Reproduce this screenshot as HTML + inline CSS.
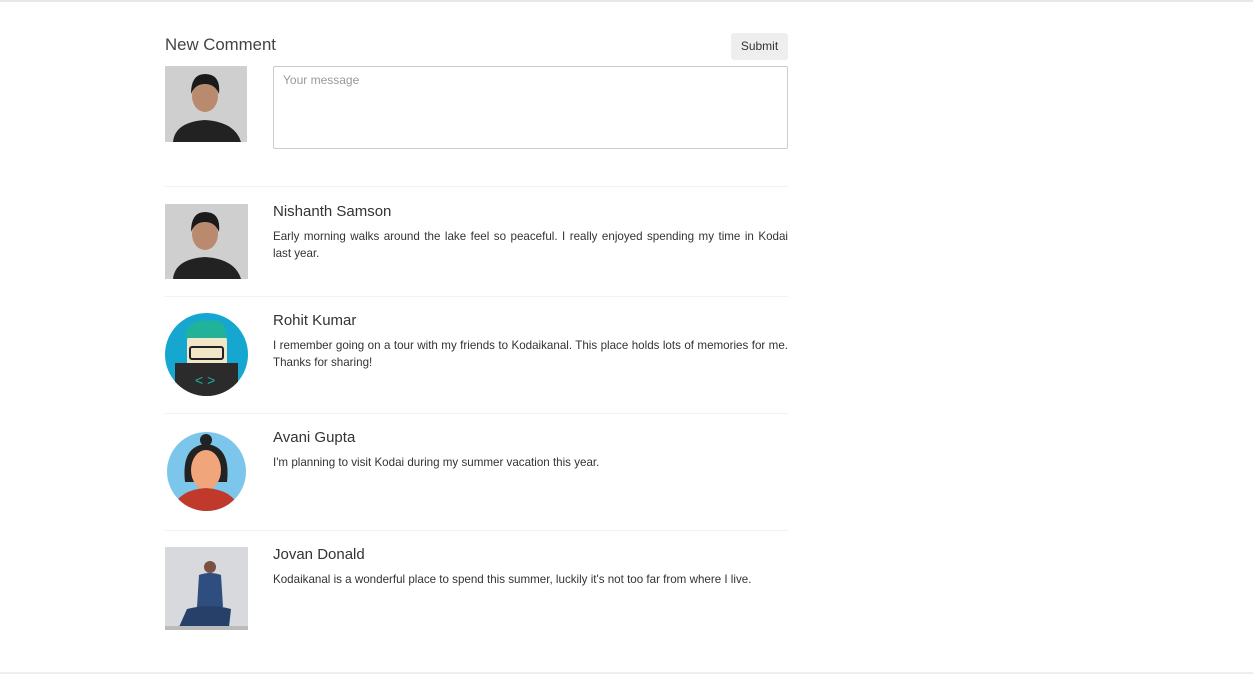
<!DOCTYPE html><html><head><style>
body{margin:0;width:1253px;height:676px;background:#fff;font-family:"Liberation Sans",sans-serif;color:#333;position:relative;overflow:hidden}
.a{position:absolute}
.hr{position:absolute;left:165px;width:623px;border-top:1px solid #f2f2f2}
.n{position:absolute;left:273px;font-size:15px;color:#333}
.t{position:absolute;left:273px;width:515px;font-size:11.6px;line-height:17px;text-align:justify;color:#333}
</style></head><body>
<div class="a" style="left:0;top:0;width:1253px;height:2px;background:#e8e8e8"></div>
<div class="a" style="left:0;top:672px;width:1253px;height:2px;background:#eee"></div>
<div class="a" style="left:165px;top:35px;font-size:16.8px;color:#444">New Comment</div>
<div class="a" style="left:731px;top:33px;width:57px;height:27px;background:#eee;border-radius:3px;font-size:12px;line-height:27px;text-align:center;color:#333">Submit</div>
<svg class="a" style="left:165px;top:66px" width="82" height="76"><rect width="82" height="76" fill="#cfcfcf"/><ellipse cx="40" cy="30" rx="13" ry="16" fill="#b98a6e"/><path d="M26 28 Q26 8 40 8 Q56 8 54 28 Q50 18 40 18 Q30 18 26 28Z" fill="#1a1a1a"/><path d="M8 76 Q10 56 40 54 Q70 56 76 76Z" fill="#222"/></svg>
<div class="a" style="left:273px;top:66px;width:513px;height:81px;border:1px solid #ccc;border-radius:2px"></div>
<div class="a" style="left:283px;top:73px;font-size:12px;color:#999">Your message</div>
<div class="hr" style="top:186px"></div>
<svg class="a" style="left:165px;top:204px" width="83" height="75"><rect width="83" height="75" fill="#cfcfcf"/><ellipse cx="40" cy="30" rx="13" ry="16" fill="#b98a6e"/><path d="M26 28 Q26 8 40 8 Q56 8 54 28 Q50 18 40 18 Q30 18 26 28Z" fill="#1a1a1a"/><path d="M8 75 Q10 55 40 53 Q70 55 76 75Z" fill="#222"/></svg>
<div class="n" style="top:203px">Nishanth Samson</div>
<div class="t" style="top:228px">Early morning walks around the lake feel so peaceful. I really enjoyed spending my time in Kodai last year.</div>
<div class="hr" style="top:296px"></div>
<svg class="a" style="left:165px;top:313px" width="83" height="83"><defs><clipPath id="c1"><circle cx="41.5" cy="41.5" r="41.5"/></clipPath></defs><circle cx="41.5" cy="41.5" r="41.5" fill="#16a7d0"/><g clip-path="url(#c1)"><rect x="22" y="20" width="40" height="40" rx="8" fill="#f2e6c9"/><path d="M20 25 Q22 5 45 8 Q60 4 62 25 Z" fill="#20b39a"/><rect x="25" y="34" width="33" height="12" rx="2" fill="none" stroke="#222" stroke-width="2"/><path d="M10 50 H73 V83 H10Z" fill="#2b2b2b"/><text x="30" y="72" fill="#20b39a" font-size="14">&lt; &gt;</text></g></svg>
<div class="n" style="top:312px">Rohit Kumar</div>
<div class="t" style="top:337px">I remember going on a tour with my friends to Kodaikanal. This place holds lots of memories for me. Thanks for sharing!</div>
<div class="hr" style="top:413px"></div>
<svg class="a" style="left:167px;top:432px" width="79" height="79"><defs><clipPath id="c2"><circle cx="39.5" cy="39.5" r="39.5"/></clipPath></defs><circle cx="39.5" cy="39.5" r="39.5" fill="#7cc6ec"/><g clip-path="url(#c2)"><circle cx="39" cy="8" r="6" fill="#222"/><path d="M18 50 Q14 14 39 12 Q64 14 60 50 Z" fill="#222"/><ellipse cx="39" cy="38" rx="15" ry="20" fill="#f0a67a"/><path d="M5 79 Q10 58 39 56 Q68 58 73 79Z" fill="#c0392b"/></g></svg>
<div class="n" style="top:429px">Avani Gupta</div>
<div class="t" style="top:454px">I'm planning to visit Kodai during my summer vacation this year.</div>
<div class="hr" style="top:530px"></div>
<svg class="a" style="left:165px;top:547px" width="83" height="83"><rect width="83" height="83" fill="#d8d9dc"/><circle cx="45" cy="20" r="6" fill="#7a5040"/><path d="M34 28 Q45 24 56 28 L58 60 L32 60Z" fill="#2f4e80"/><path d="M14 80 L22 62 Q45 56 66 62 L64 80Z" fill="#26406a"/><rect y="79" width="83" height="4" fill="#bbb"/></svg>
<div class="n" style="top:546px">Jovan Donald</div>
<div class="t" style="top:571px">Kodaikanal is a wonderful place to spend this summer, luckily it's not too far from where I live.</div>
</body></html>
